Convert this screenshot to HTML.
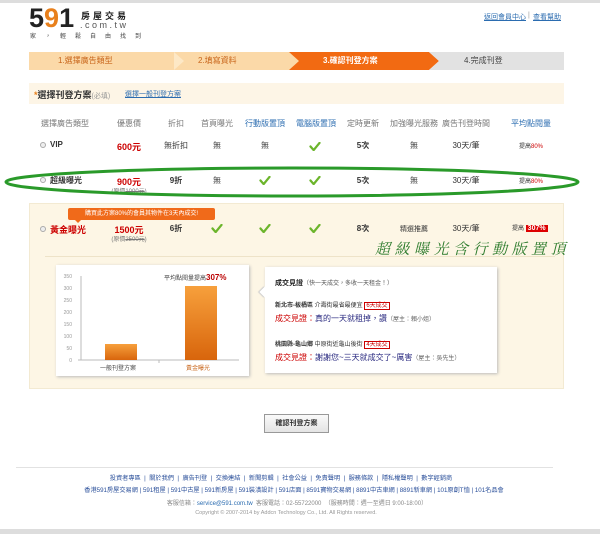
<!DOCTYPE html>
<html><head><meta charset="utf-8">
<style>
*{margin:0;padding:0;box-sizing:border-box}
body{width:600px;height:534px;background:#fff;position:relative;overflow:hidden;font-family:"Liberation Sans","Noto Sans CJK TC",sans-serif;font-size:8px;color:#333}
.a{position:absolute;white-space:nowrap}
.c{transform:translateX(-50%)}
.chk{position:absolute;width:12px;height:9px}
.blue{color:#2b6cb0}
.red{color:#c00}
</style></head><body>
<div class="a" style="left:0;top:0;width:600px;height:3px;background:#ddd"></div>
<!-- logo -->
<div class="a" style="left:29px;top:5px;font:bold 27px/27px 'Liberation Sans',sans-serif;color:#222;letter-spacing:0px">5<span style="color:#e8801c">9</span>1</div>
<div class="a" style="left:81px;top:9px;font:bold 9px 'Noto Sans CJK TC',sans-serif;letter-spacing:3px;color:#222">房屋交易</div>
<div class="a" style="left:80px;top:20px;font:9px 'Liberation Sans',sans-serif;letter-spacing:2.5px;color:#555">.com.tw</div>
<div class="a" style="left:30px;top:31px;font:6px 'Noto Sans CJK TC',sans-serif;letter-spacing:9px;color:#444">家，輕鬆自由找到</div>
<div class="a blue" style="left:484px;top:12px;font-size:7px;text-decoration:underline">返回會員中心</div>
<div class="a" style="left:528px;top:12px;font-size:7px;color:#999">|</div>
<div class="a blue" style="left:533px;top:12px;font-size:7px;text-decoration:underline">查看幫助</div>
<!-- steps -->
<svg class="a" style="left:29px;top:52px" width="535" height="18">
<polygon points="0,0 330,0 330,18 0,18" fill="#fbd9a8"/>
<polygon points="145,0 155,9 145,18" fill="#fde8c6"/>
<polygon points="260,0 400,0 410,9 400,18 260,18 270,9" fill="#f26a12"/>
<polygon points="400,0 535,0 535,18 400,18 410,9" fill="#e2e2e2"/>
</svg>
<div class="a" style="left:58px;top:55px;font-size:8px;color:#c8651a">1.選擇廣告類型</div>
<div class="a" style="left:198px;top:55px;font-size:8px;color:#c8651a">2.填寫資料</div>
<div class="a" style="left:323px;top:55px;font-size:8px;color:#fff;font-weight:bold">3.確認刊登方案</div>
<div class="a" style="left:464px;top:55px;font-size:8px;color:#444">4.完成刊登</div>
<!-- section header -->
<div class="a" style="left:29px;top:83px;width:535px;height:21px;background:#fdf5e6"></div>
<div class="a" style="left:34px;top:88px;font-size:9px;font-weight:bold;color:#333"><span style="color:#e8801c">*</span>選擇刊登方案<span style="font-weight:normal;font-size:7px;color:#999">(必填)</span></div>
<div class="a blue" style="left:125px;top:89px;font-size:7px;text-decoration:underline">選擇一般刊登方案</div>
<!-- header row -->
<div class="a c" style="left:65px;top:118px;font-size:8px;color:#777">選擇廣告類型</div>
<div class="a c" style="left:129px;top:118px;font-size:8px;color:#777">優惠價</div>
<div class="a c" style="left:176px;top:118px;font-size:8px;color:#777">折扣</div>
<div class="a c" style="left:217px;top:118px;font-size:8px;color:#777">首頁曝光</div>
<div class="a c blue" style="left:265px;top:118px;font-size:8px">行動版置頂</div>
<div class="a c blue" style="left:316px;top:118px;font-size:8px">電腦版置頂</div>
<div class="a c" style="left:363px;top:118px;font-size:8px;color:#777">定時更新</div>
<div class="a c" style="left:414px;top:118px;font-size:8px;color:#777">加強曝光服務</div>
<div class="a c" style="left:466px;top:118px;font-size:8px;color:#777">廣告刊登時間</div>
<div class="a c blue" style="left:531px;top:118px;font-size:8px">平均點閱量</div>
<!-- VIP row -->
<div class="a" style="left:40px;top:142px;width:6px;height:6px;border:1px solid #aaa;border-radius:50%;background:#eee"></div>
<div class="a" style="left:50px;top:140px;font-size:8px;font-weight:bold">VIP</div>
<div class="a c red" style="left:129px;top:140px;font-size:9px;font-weight:bold">600元</div>
<div class="a c" style="left:176px;top:140px">無折扣</div>
<div class="a c" style="left:217px;top:140px">無</div>
<div class="a c" style="left:265px;top:140px">無</div>
<div class="a c" style="left:363px;top:140px;font-weight:bold">5次</div>
<div class="a c" style="left:414px;top:140px">無</div>
<div class="a c" style="left:466px;top:140px">30天/筆</div>
<div class="a c" style="left:531px;top:141px;font-size:6px">提高<span class="red">80%</span></div>
<!-- Super row -->
<div class="a" style="left:40px;top:177px;width:6px;height:6px;border:1px solid #aaa;border-radius:50%;background:#eee"></div>
<div class="a" style="left:50px;top:175px;font-size:8px;font-weight:bold">超級曝光</div>
<div class="a c red" style="left:129px;top:175px;font-size:9px;font-weight:bold">900元</div>
<div class="a c" style="left:129px;top:186px;font-size:6px;color:#777">(原價<s>1000元</s>)</div>
<div class="a c" style="left:176px;top:175px;font-weight:bold">9折</div>
<div class="a c" style="left:217px;top:175px">無</div>
<div class="a c" style="left:363px;top:175px;font-weight:bold">5次</div>
<div class="a c" style="left:414px;top:175px">無</div>
<div class="a c" style="left:466px;top:175px">30天/筆</div>
<div class="a c" style="left:531px;top:176px;font-size:6px">提高<span class="red">80%</span></div>
<!-- gold block -->
<div class="a" style="left:29px;top:203px;width:535px;height:186px;background:#fdf6e5;border:1px solid #f3ead2"></div>
<div class="a" style="left:68px;top:208px;width:147px;height:12px;background:#f06a1a;border-radius:2px;color:#fff;font-size:6px;line-height:12px;text-align:center">購買此方案80%的會員其物件在3天內成交!</div>
<div class="a" style="left:75px;top:220px;border:3px solid transparent;border-top-color:#f06a1a"></div>
<div class="a" style="left:40px;top:226px;width:6px;height:6px;border:1px solid #aaa;border-radius:50%;background:#eee"></div>
<div class="a red" style="left:50px;top:223px;font-size:9px;font-weight:bold">黃金曝光</div>
<div class="a c red" style="left:129px;top:223px;font-size:9px;font-weight:bold">1500元</div>
<div class="a c" style="left:129px;top:234px;font-size:6px;color:#777">(原價<s>2500元</s>)</div>
<div class="a c" style="left:176px;top:223px;font-weight:bold">6折</div>
<div class="a c" style="left:363px;top:223px;font-weight:bold">8次</div>
<div class="a c" style="left:414px;top:224px;font-size:7px">精選推薦</div>
<div class="a c" style="left:466px;top:223px">30天/筆</div>
<div class="a" style="left:512px;top:223px;font-size:6px">提高 <span style="background:#d00;color:#fff;padding:0 2px;font-size:7px;font-weight:bold">307%</span></div>
<div class="a" style="left:45px;top:256px;width:510px;height:1px;background:#eee3c8"></div>
<div class="a" style="left:375px;top:240px;font:italic 15px/18px 'Noto Serif CJK SC',serif;color:#2a7a2a;letter-spacing:4.5px">超級曝光含行動版置頂</div>
<!-- checks -->
<svg width="0" height="0" style="position:absolute"><defs><symbol id="k" viewBox="0 0 12 10"><path d="M1 5 L4.5 9 L11 1" fill="none" stroke="#6cb52c" stroke-width="2.5" stroke-linecap="round"/></symbol></defs></svg>
<svg class="chk" style="left:309px;top:142px"><use href="#k"/></svg>
<svg class="chk" style="left:259px;top:176px"><use href="#k"/></svg>
<svg class="chk" style="left:309px;top:176px"><use href="#k"/></svg>
<svg class="chk" style="left:211px;top:224px"><use href="#k"/></svg>
<svg class="chk" style="left:259px;top:224px"><use href="#k"/></svg>
<svg class="chk" style="left:309px;top:224px"><use href="#k"/></svg>
<!-- ellipse -->
<svg class="a" style="left:0;top:162px" width="600" height="40"><ellipse cx="292" cy="20" rx="286" ry="14" fill="none" stroke="#2a9a2a" stroke-width="3"/></svg>
<!-- chart -->
<div class="a" style="left:56px;top:265px;width:193px;height:111px;background:#fff;box-shadow:1px 1px 3px #bbb"></div>
<svg class="a" style="left:56px;top:265px" width="193" height="111">
<g font-size="5" fill="#999" font-family="Liberation Sans" text-anchor="end">
<text x="16" y="13">350</text><text x="16" y="25">300</text><text x="16" y="37">250</text><text x="16" y="49">200</text><text x="16" y="61">150</text><text x="16" y="73">100</text><text x="16" y="85">50</text><text x="16" y="97">0</text></g>
<line x1="25" y1="11" x2="25" y2="95" stroke="#bbb"/>
<line x1="22" y1="95" x2="183" y2="95" stroke="#bbb"/>
<line x1="103" y1="95" x2="103" y2="98" stroke="#bbb"/>
<defs><linearGradient id="g" x1="0" y1="0" x2="0" y2="1"><stop offset="0" stop-color="#f7a03c"/><stop offset="1" stop-color="#d8650c"/></linearGradient></defs>
<rect x="49" y="79" width="32" height="16" fill="url(#g)"/>
<rect x="129" y="21" width="32" height="74" fill="url(#g)"/>
</svg>
<div class="a" style="left:164px;top:273px;font-size:6px;color:#444">平均點閱量提高<b style="color:#b00;font-size:8px">307%</b></div>
<div class="a" style="left:100px;top:363px;font-size:6px;color:#444">一般刊登方案</div>
<div class="a" style="left:186px;top:363px;font-size:6px;color:#c8651a">黃金曝光</div>
<!-- testimonial -->
<div class="a" style="left:265px;top:267px;width:232px;height:106px;background:#fff;box-shadow:1px 1px 3px #bbb"></div>
<div class="a" style="left:261px;top:288px;width:8px;height:8px;background:#fff;transform:rotate(45deg);box-shadow:-1px 1px 1px #ccc"></div>
<div class="a" style="left:275px;top:278px;font-size:7px;font-weight:bold;color:#222">成交見證<span style="font-weight:normal;font-size:6px;color:#555">（快一天成交，多收一天租金！）</span></div>
<div class="a" style="left:275px;top:300px;font-size:6px;color:#333"><b>新北市-板橋區</b> 介壽街最省最便宜 <span style="color:#c00;border:1px solid #c00;padding:0 1px">6天成交</span></div>
<div class="a" style="left:275px;top:313px;font-size:8px"><span style="color:#c00">成交見證：</span><span style="color:#2a2a80">真的一天就租掉，讚</span><span style="font-size:6px;color:#666">（屋主：賴小姐）</span></div>
<div class="a" style="left:275px;top:339px;font-size:6px;color:#333"><b>桃園縣-龜山鄉</b> 中原街近龜山後街 <span style="color:#c00;border:1px solid #c00;padding:0 1px">4天成交</span></div>
<div class="a" style="left:275px;top:352px;font-size:8px"><span style="color:#c00">成交見證：</span><span style="color:#2a2a80">謝謝您~三天就成交了~厲害</span><span style="font-size:6px;color:#666">（屋主：吳先生）</span></div>
<!-- button -->
<div class="a" style="left:264px;top:414px;width:65px;height:19px;border:1px solid #999;background:linear-gradient(#fafafa,#e4e4e4);font-size:7px;font-weight:bold;color:#333;text-align:center;line-height:17px">確認刊登方案</div>
<!-- footer -->
<div class="a" style="left:16px;top:467px;width:537px;height:1px;background:#e2e2e2"></div>
<div class="a c" style="left:281px;top:473px;font-size:6.2px;color:#2a4f9a">投資者專區 &nbsp;|&nbsp; 關於我們 &nbsp;|&nbsp; 廣告刊登 &nbsp;|&nbsp; 交換連結 &nbsp;|&nbsp; 新聞剪輯 &nbsp;|&nbsp; 社會公益 &nbsp;|&nbsp; 免責聲明 &nbsp;|&nbsp; 服務條款 &nbsp;|&nbsp; 隱私權聲明 &nbsp;|&nbsp; 數字經銷商</div>
<div class="a c" style="left:294px;top:485px;font-size:6.2px;color:#2a4f9a">香港591房屋交易網 | 591租屋 | 591中古屋 | 591新房屋 | 591裝潢設計 | 591店面 | 8591寶物交易網 | 8891中古車網 | 8891新車網 | 101原創T恤 | 101名品會</div>
<div class="a c" style="left:297px;top:498px;font-size:6px;color:#888">客服信箱：<span class="blue">service@591.com.tw</span> &nbsp;客服電話：02-55722000 &nbsp;（服務時間：週一至週日 9:00-18:00）</div>
<div class="a c" style="left:286px;top:510px;font-size:5.5px;color:#999">Copyright © 2007-2014 by Addcn Technology Co., Ltd. All Rights reserved.</div>
<div class="a" style="left:0;top:529px;width:600px;height:5px;background:#ddd"></div>
</body></html>
